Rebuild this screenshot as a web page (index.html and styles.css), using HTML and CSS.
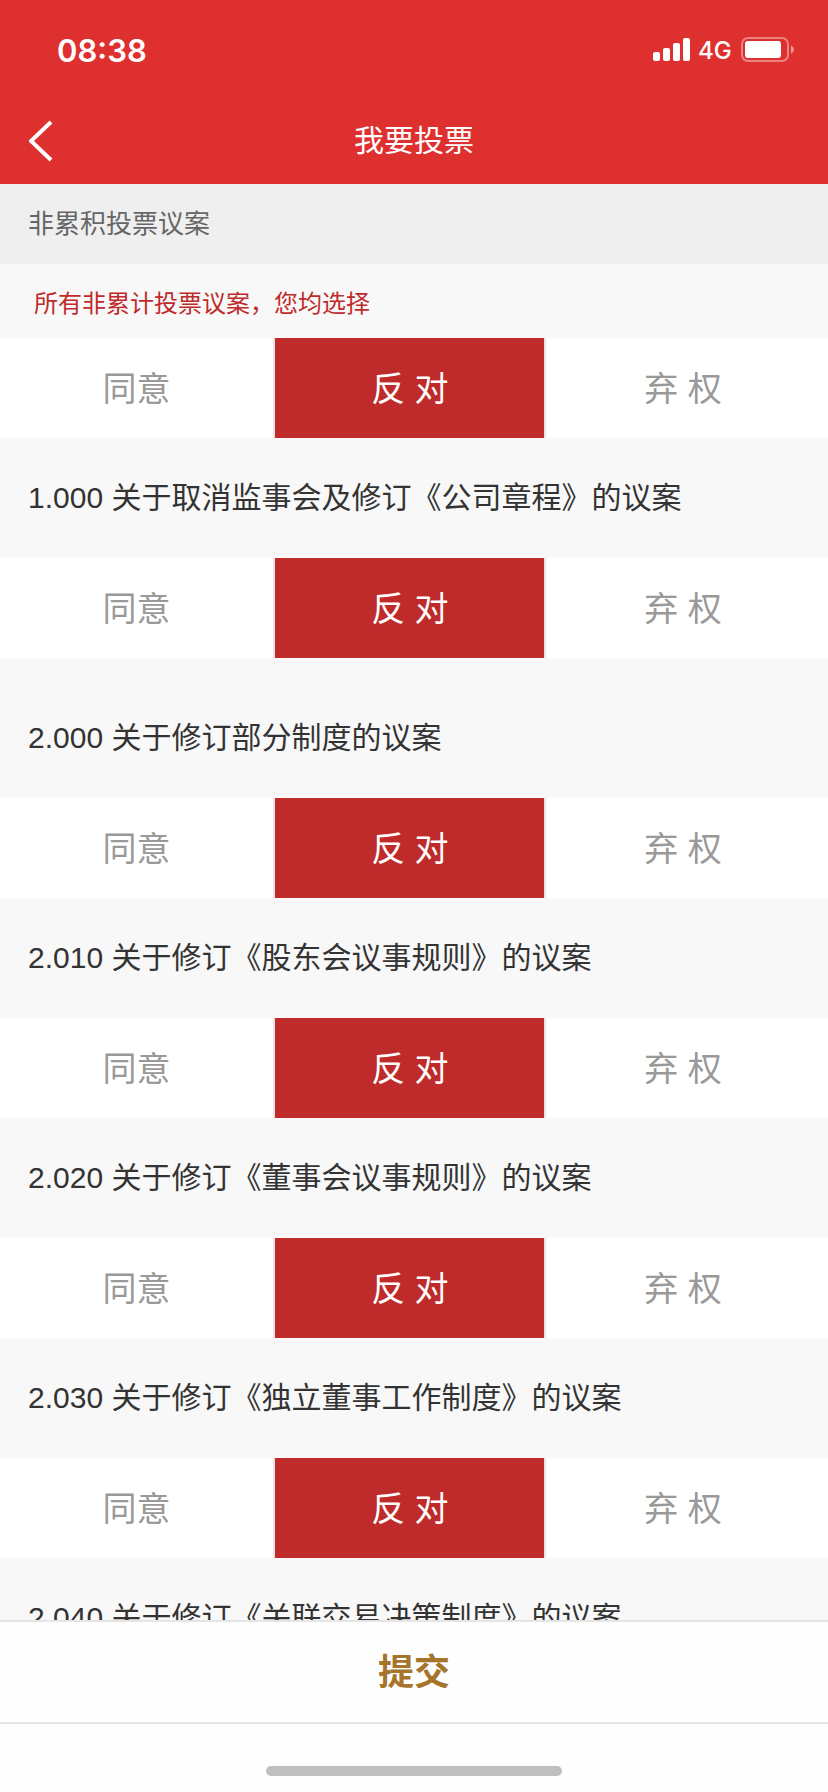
FILE: index.html
```html
<!DOCTYPE html>
<html lang="zh-CN">
<head>
    <meta charset="UTF-8">
    <meta name="viewport" content="width=device-width, initial-scale=1.0">
    <title>我要投票</title>
    <link rel="stylesheet" href="styles.css">
</head>
<body>
    <div class="header">
        <div class="status-bar">
            <span class="time">08:38</span>
            <div class="status-icons">
                <svg class="signal" width="37" height="24" viewBox="0 0 37 24" fill="#fff">
                    <rect x="0" y="14" width="7" height="9" rx="2"/>
                    <rect x="10" y="10" width="7" height="13" rx="2"/>
                    <rect x="20" y="5" width="7" height="18" rx="2"/>
                    <rect x="30" y="0" width="7" height="23" rx="2"/>
                </svg>
                <span class="network">4G</span>
                <svg class="battery" width="54" height="26" viewBox="0 0 54 26">
                    <rect x="1" y="1" width="46" height="23" rx="6" fill="none" stroke="#fff" stroke-opacity="0.4" stroke-width="2"/>
                    <rect x="4" y="4" width="36" height="17" rx="3" fill="#fff"/>
                    <path d="M50 8.5 Q53 10 53 12.5 Q53 15 50 16.5 Z" fill="#fff" fill-opacity="0.5"/>
                </svg>
            </div>
        </div>
        <div class="nav-bar">
            <svg class="back" width="24" height="42" viewBox="0 0 24 42">
                <path d="M22 2 L2 21 L22 40" fill="none" stroke="#fff" stroke-width="4"/>
            </svg>
            <h1>我要投票</h1>
        </div>
    </div>

    <div class="content">
        <div class="section-title">非累积投票议案</div>
        <div class="tips">所有非累计投票议案，您均选择</div>
        <div class="options">
            <div class="option">同意</div>
            <div class="option active">反 对</div>
            <div class="option">弃 权</div>
        </div>

        <div class="proposal">1.000 关于取消监事会及修订《公司章程》的议案</div>
        <div class="options">
            <div class="option">同意</div>
            <div class="option active">反 对</div>
            <div class="option">弃 权</div>
        </div>

        <div class="proposal group">2.000 关于修订部分制度的议案</div>
        <div class="options">
            <div class="option">同意</div>
            <div class="option active">反 对</div>
            <div class="option">弃 权</div>
        </div>

        <div class="proposal">2.010 关于修订《股东会议事规则》的议案</div>
        <div class="options">
            <div class="option">同意</div>
            <div class="option active">反 对</div>
            <div class="option">弃 权</div>
        </div>

        <div class="proposal">2.020 关于修订《董事会议事规则》的议案</div>
        <div class="options">
            <div class="option">同意</div>
            <div class="option active">反 对</div>
            <div class="option">弃 权</div>
        </div>

        <div class="proposal">2.030 关于修订《独立董事工作制度》的议案</div>
        <div class="options">
            <div class="option">同意</div>
            <div class="option active">反 对</div>
            <div class="option">弃 权</div>
        </div>

        <div class="proposal">2.040 关于修订《关联交易决策制度》的议案</div>
    </div>

    <div class="footer">
        <div class="submit">提交</div>
        <div class="home-bar"></div>
    </div>
</body>
</html>
```
FILE: styles.css
```css
* {
    box-sizing: border-box;
}
body {
    margin: 0;
    height: 1792px;
    display: flex;
    flex-direction: column;
    overflow: hidden;
    font-family: "Liberation Sans", "Noto Sans CJK SC", sans-serif;
    font-weight: normal;
    background-color: #fff;
}
.header {
    flex: none;
    height: 184px;
    background-color: #df3030;
    color: #fff;
}
.status-bar {
    height: 98px;
    padding: 0 34px 0 57px;
    display: flex;
    align-items: center;
    justify-content: space-between;
    font-family: Inter, sans-serif;
}
.time {
    padding-top: 2px;
    font-size: 31px;
    font-weight: 600;
}
.status-icons {
    display: flex;
    align-items: center;
}
.signal {
    margin-top: 2px;
}
.network {
    width: 51px;
    padding-left: 8px;
    padding-top: 3px;
    font-size: 24px;
    font-weight: 450;
}
.battery {
    margin-top: 2px;
    margin-right: -1px;
}
.nav-bar {
    height: 86px;
    padding: 0 29px;
    display: grid;
    grid-template-columns: 24px 1fr 24px;
    align-items: center;
}
.nav-bar h1 {
    margin: 0;
    font-size: 30px;
    font-weight: normal;
    line-height: 84px;
    text-align: center;
}
.content {
    flex: 1;
    min-height: 0;
    overflow: hidden;
    background-color: #f8f8f8;
}
.section-title {
    height: 80px;
    padding-left: 28px;
    line-height: 80px;
    font-size: 26px;
    color: #666;
    background-color: #efefef;
}
.tips {
    height: 74px;
    padding-left: 34px;
    line-height: 80px;
    font-size: 24px;
    color: #bf2b2a;
}
.options {
    height: 100px;
    display: flex;
    background-color: #fff;
}
.option {
    width: 33%;
    line-height: 102px;
    font-size: 34px;
    text-align: center;
    color: #999;
}
.option.active {
    color: #fff;
    background-color: #bf2b2a;
    border-left: 2px solid #e5e5e5;
    border-right: 2px solid #e5e5e5;
}
.proposal {
    height: 120px;
    padding-left: 28px;
    line-height: 120px;
    font-size: 30px;
    white-space: nowrap;
    color: #333;
}
.proposal.group {
    margin-top: 20px;
}
.footer {
    flex: none;
    height: 172px;
    background-color: #fefefe;
}
.submit {
    height: 104px;
    border-top: 2px solid #e5e5e5;
    border-bottom: 2px solid #e5e5e5;
    line-height: 102px;
    font-size: 36px;
    font-weight: bold;
    text-align: center;
    color: #a5752b;
}
.home-bar {
    width: 296px;
    height: 10px;
    margin: 42px auto 0;
    border-radius: 5px;
    background-color: #bfbfbf;
}
```
